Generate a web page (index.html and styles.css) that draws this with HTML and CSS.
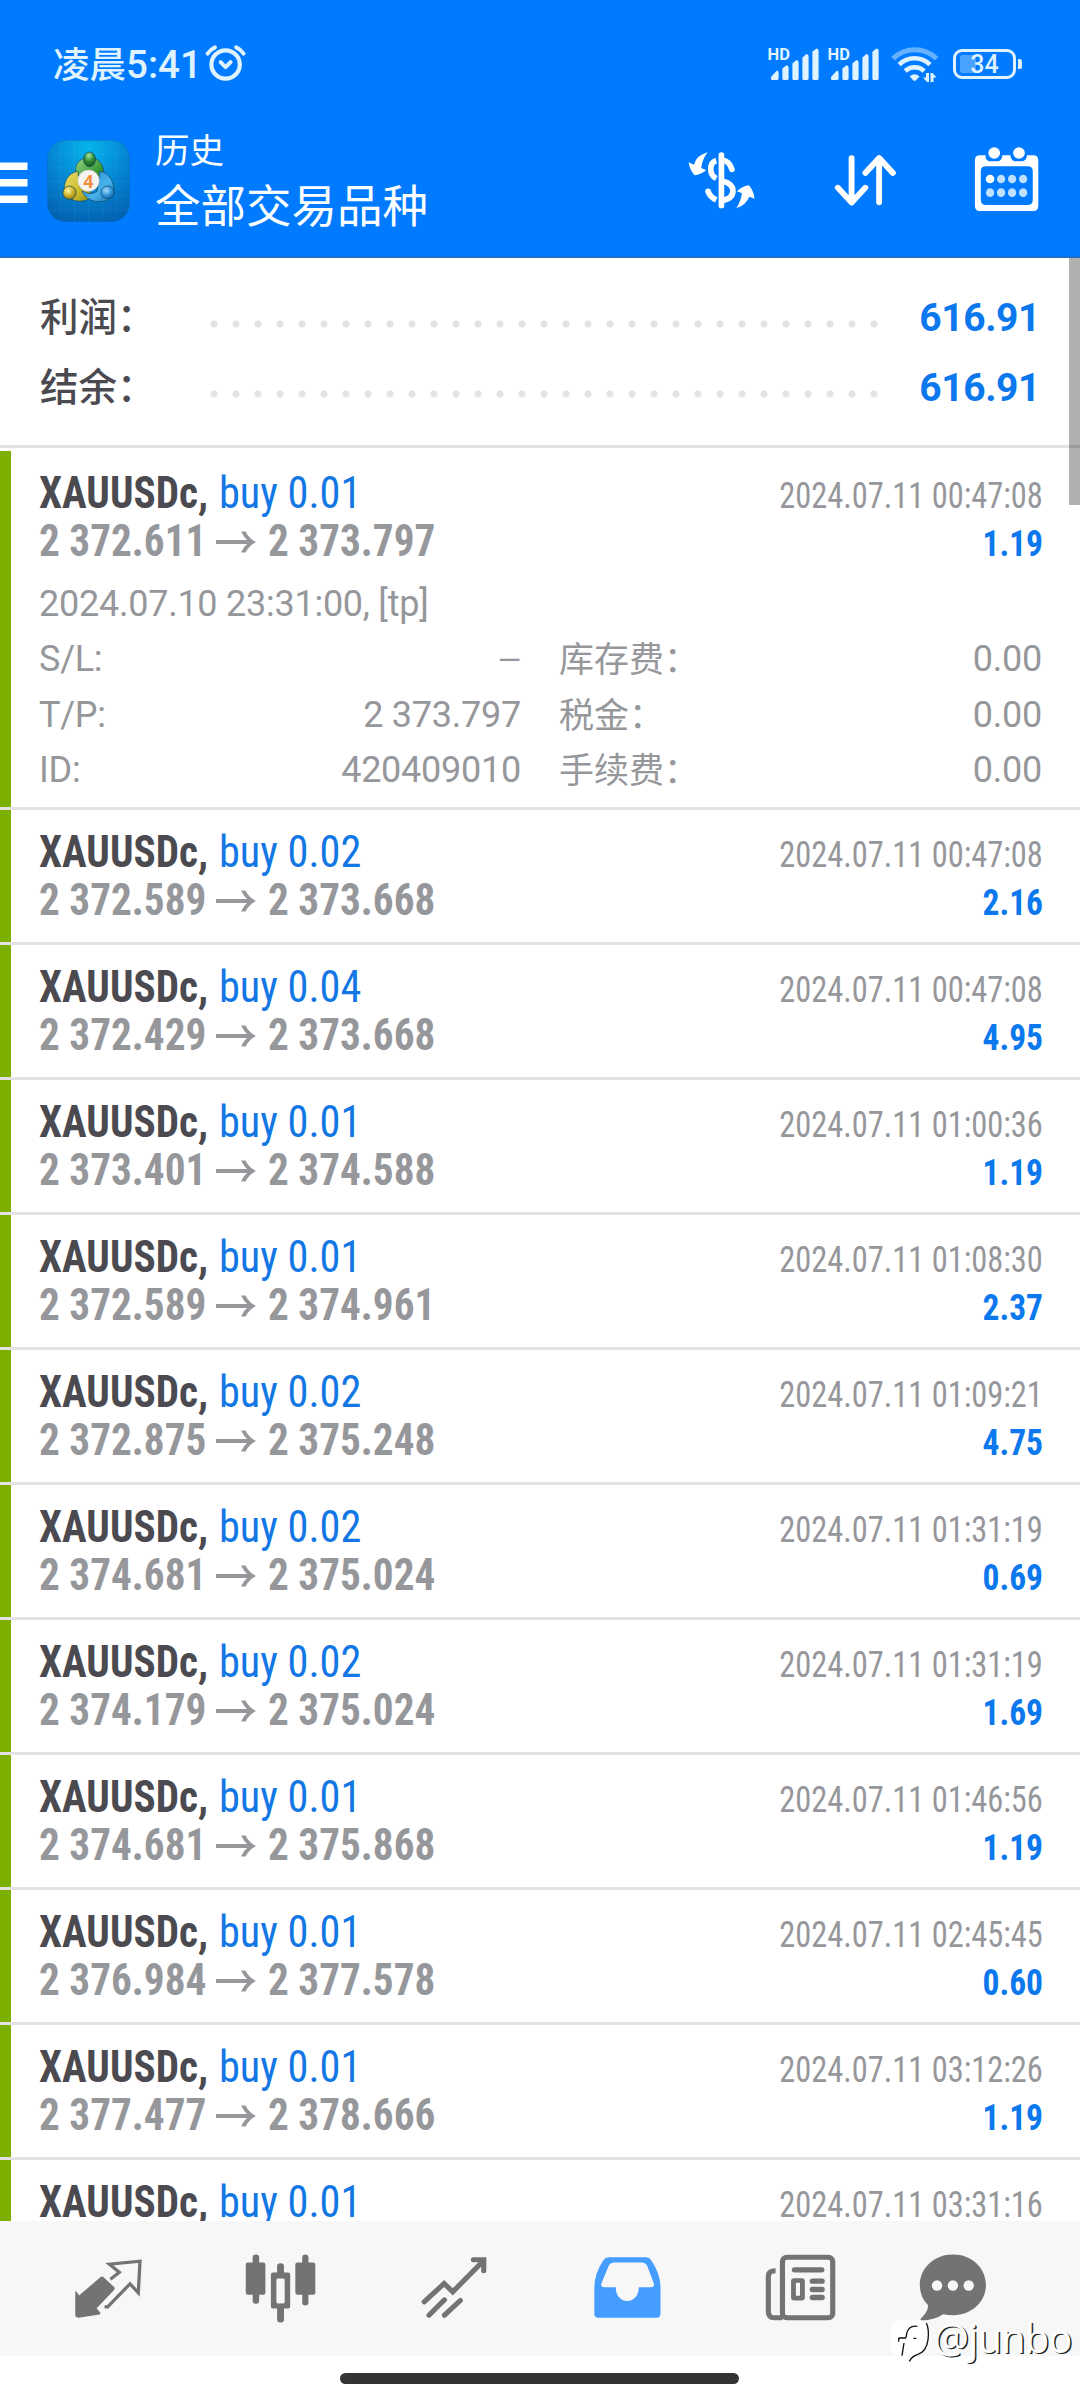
FILE: index.html
```
<!DOCTYPE html>
<html lang="zh-CN">
<head>
<meta charset="utf-8">
<title>历史</title>
<link rel="stylesheet" href="styles.css">
</head>
<body>
<div class="screen">
  <header class="header">
    <div class="status">
      <span class="clock"><span class="clock-period">凌晨</span>5:41</span>
      <svg class="alarm" width="44" height="44" viewBox="0 0 44 44" fill="none" stroke="#dff3ff" stroke-linecap="round">
        <circle cx="22.6" cy="23.5" r="14.2" stroke-width="4.2"/>
        <path d="M17.6 21.2 L22.6 26.2 L27.6 21.2" stroke-width="4" stroke-linejoin="round"/>
        <path d="M4.6 12.6 Q7.5 8.5 12 6.4 M33.2 6.4 Q37.7 8.5 40.6 12.6" stroke-width="4"/>
      </svg>
      <svg class="indicators" width="260" height="44" viewBox="0 0 260 44" fill="#dff3ff">
        <g id="signal">
          <text class="hd" x="6.5" y="18">HD</text>
          <path d="M10 38 V35 L16 28.6 Q17.6 29 17.6 31 V36.5 Q17.6 38 16 38 H11 Q10 38 10 37Z"/>
          <path d="M21.4 36.8 V26.5 L25.5 23.2 Q27.6 23.4 27.6 25.5 V36.5 Q27.6 38 26 38 H22.8 Q21.4 38 21.4 36.8Z"/>
          <path d="M31.4 36.8 V21.5 L35.5 18 Q37.6 18.2 37.6 20.5 V36.5 Q37.6 38 36 38 H32.8 Q31.4 38 31.4 36.8Z"/>
          <path d="M41.4 36.8 V15.5 L45.5 12 Q47.6 12.2 47.6 14.5 V36.5 Q47.6 38 46 38 H42.8 Q41.4 38 41.4 36.8Z"/>
          <path d="M51.4 36.8 V9.8 L55.5 6.6 Q57.6 6.8 57.6 9 V36.5 Q57.6 38 56 38 H52.8 Q51.4 38 51.4 36.8Z"/>
        </g>
        <use href="#signal" x="60"/>
        <g fill="none" stroke="#dff3ff">
          <path d="M132 16.8 A31 31 0 0 1 175.6 16.8" stroke="#66b1ff" stroke-width="5"/>
          <path d="M138.2 22.6 A22 22 0 0 1 169 22.6" stroke-width="4.6"/>
          <path d="M144.2 29 A14 14 0 0 1 163.2 29" stroke-width="4.6"/>
        </g>
        <path d="M148.7 34.5 Q153.6 30 158.5 34.5 L154.8 38.4 Q153.6 39.3 152.4 38.4Z"/>
        <path d="M165 31 H168 V40 H166 L162 35.6 H165Z M169.5 31 H171.5 L175.6 35.6 H172.5 V40 H169.5Z"/>
        <rect x="193.5" y="8.5" width="60" height="27" rx="7.5" fill="none" stroke="#dff3ff" stroke-width="3"/>
        <path d="M202 13 H215 V31 H202 Q199 31 199 28 V16 Q199 13 202 13Z" fill="#4aa2ff"/>
        <path d="M257 17 h1.5 q2.500 0 2.500 2.500 v5 q0 2.500 -2.500 2.500 h-1.500z"/>
        <text class="battery-text" x="223.500" y="30.800" text-anchor="middle">34</text>
      </svg>
    </div>
    <div class="toolbar">
      <svg class="menu" width="28" height="42" viewBox="0 0 28 42" fill="#fff">
        <path d="M0 0.5h27.500v7.500h-27.500z M0 17h27.500v7.500h-27.500z M0 33.500h27.500v7.500h-27.500z"/>
      </svg>
      <svg class="logo" width="83" height="82" viewBox="20 30 248 246">
        <defs>
          <radialGradient id="bg" cx=".5" cy=".1" r=".95"><stop offset="0" stop-color="#06b4ec"/><stop offset=".5" stop-color="#0586d3"/><stop offset="1" stop-color="#0260b0"/></radialGradient>
          <linearGradient id="gr" x1="0" y1="0" x2="1" y2="1"><stop offset="0" stop-color="#9bd488"/><stop offset=".6" stop-color="#3f9e3a"/><stop offset="1" stop-color="#1f7426"/></linearGradient>
          <linearGradient id="ye" x1="0" y1="0" x2="1" y2="1"><stop offset="0" stop-color="#e9dd6c"/><stop offset=".6" stop-color="#cdbd2c"/><stop offset="1" stop-color="#8f8714"/></linearGradient>
          <linearGradient id="bl" x1="0" y1="0" x2="1" y2="1"><stop offset="0" stop-color="#2687cc"/><stop offset=".6" stop-color="#4ab2ea"/><stop offset="1" stop-color="#136fae"/></linearGradient>
          <radialGradient id="hg" cx=".45" cy=".25" r=".8"><stop offset="0" stop-color="#a8e59a"/><stop offset=".5" stop-color="#318d36"/><stop offset="1" stop-color="#0e4f1a"/></radialGradient>
          <radialGradient id="hy" cx=".4" cy=".35" r=".8"><stop offset="0" stop-color="#fff8a8"/><stop offset=".5" stop-color="#c8ae24"/><stop offset="1" stop-color="#716710"/></radialGradient>
          <radialGradient id="hb" cx=".4" cy=".35" r=".8"><stop offset="0" stop-color="#a6dcfa"/><stop offset=".5" stop-color="#2f94d8"/><stop offset="1" stop-color="#0b548f"/></radialGradient>
        </defs>
        <rect x="21" y="31" width="246" height="244" rx="54" fill="url(#bg)" stroke="#0a66b4" stroke-opacity=".6" stroke-width="2"/>
        <path d="M60 33V273 M102 31V275 M144 31V275 M187 31V275 M229 33V273 M22 70H266 M21 112H267 M21 155H267 M21 198H267 M22 240H266" stroke="#5cc8f4" stroke-opacity=".16" stroke-width="2"/>
        <g stroke="#0c4a66" stroke-opacity=".65" stroke-width="3">
          <path d="M144 82 C174 80 194 108 189 138 C186 152 178 160 168 162 L160 150 H120 L112 132 C97 122 108 84 144 82Z" fill="url(#gr)"/>
          <path d="M112 124 C82 128 68 158 72 184 C78 208 112 220 138 210 C148 206 152 196 150 186 L118 172Z" fill="url(#ye)"/>
          <path d="M178 124 C206 126 222 158 220 188 C214 216 172 220 152 210 C138 204 128 194 124 182 C140 192 156 194 170 184Z" fill="url(#bl)"/>
          <ellipse cx="147" cy="88" rx="18" ry="22" fill="url(#hg)"/>
          <ellipse cx="87" cy="188" rx="20" ry="20" fill="url(#hy)"/>
          <ellipse cx="201" cy="187" rx="20" ry="19" fill="url(#hb)"/>
        </g>
        <circle cx="144" cy="152" r="32" fill="#f6f4f0" stroke="#c9c9c4" stroke-width="2"/>
        <text class="logo-digit" x="144" y="173" text-anchor="middle">4</text>
      </svg>
      <div class="titles">
        <div class="title-small">历史</div>
        <div class="title-main">全部交易品种</div>
      </div>
      <div class="actions">
        <svg width="80" height="80" viewBox="7.2 2 240 240" fill="#fff">
          <rect x="117" y="39" width="17" height="168" rx="8"/>
          <g fill="none" stroke="#fff" stroke-width="17">
            <path d="M110 63.500 Q93.500 69 93.500 89 Q93.500 109 110 117.500"/>
            <path d="M130 126 Q160 133 160 155 Q160 177 130 183"/>
            <path d="M130 62.500 Q150 66 157 90" stroke-linecap="round"/>
            <path d="M110 181.500 Q91 173 86 157"/>
          </g>
          <circle cx="85.500" cy="156" r="8.500"/>
          <path d="M84 39 Q50 48 43 76 L27 69 Q30 92 45 108 Q62 107 80 93 L65 86 Q68 60 84 39Z"/>
          <path d="M170 207 Q200 196 209 172 L225 178 Q222 154 208 138 Q190 139 172 156 L187 162 Q184 186 170 207Z"/>
        </svg>
        <svg width="80" height="80" viewBox="826.8 362 232.3 240" preserveAspectRatio="none" fill="none" stroke="#fff" stroke-width="17" stroke-linecap="round" stroke-linejoin="round">
          <path d="M904 416 V548 M864 505 L904 550 L944 505 M984 549 V417 M944 461 L984 416 L1024 461"/>
        </svg>
        <svg width="80" height="80" viewBox="1240 362 232.3 240" preserveAspectRatio="none" fill="#fff">
          <path fill-rule="evenodd" d="M1277 408 H1294 V415 Q1297 426 1310 426 H1330 Q1341 425 1343 408 H1366 Q1368 425 1379 426 H1400 Q1413 425 1414 408 H1432 Q1447 408 1447 422 V560 Q1447 575 1432 575 H1277 Q1263 575 1263 560 V422 Q1263 408 1277 408Z M1295 441 Q1280 441 1280 456 V541 Q1280 557 1295 557 H1416 Q1431 557 1431 541 V456 Q1431 441 1416 441Z"/>
          <ellipse cx="1319" cy="401" rx="17" ry="17"/><ellipse cx="1391" cy="401" rx="17" ry="17"/>
          <ellipse cx="1307" cy="479" rx="12.500" ry="13"/>
          <g fill="#bfe0ff"><ellipse cx="1339" cy="479" rx="12" ry="13"/><ellipse cx="1371" cy="479" rx="12" ry="13"/><ellipse cx="1403" cy="479" rx="12" ry="13"/><ellipse cx="1307" cy="520" rx="12" ry="13"/><ellipse cx="1339" cy="520" rx="12" ry="13"/><ellipse cx="1371" cy="520" rx="12" ry="13"/><ellipse cx="1403" cy="520" rx="12" ry="13"/></g>
        </svg>
      </div>
    </div>
  </header>

  <main class="content">
    <div class="scrollbar"></div>
    <section class="summary">
      <div class="sum-row"><span class="sum-label">利润：</span><span class="dots"></span><span class="sum-value">616.91</span></div>
      <div class="sum-row"><span class="sum-label">结余：</span><span class="dots"></span><span class="sum-value">616.91</span></div>
    </section>
    <article class="deal deal-open">
      <div class="line"><span class="symbol">XAUUSDc,</span><span class="side">buy 0.01</span><span class="date">2024.07.11 00:47:08</span></div>
      <div class="line"><span class="price">2 372.611</span><svg class="arrow" width="40" height="22" viewBox="0 0 40 22"><path class="arrow-shaft" d="M0 11H37"/><path class="arrow-head" d="M25 0.500H29.500Q33 7.500 40 11Q33 14.500 29.500 21.500H25Q28 15 33 11Q28 7 25 0.500Z"/></svg><span class="price">2 373.797</span><span class="profit">1.19</span></div>
      <div class="details">
        <div class="wide">2024.07.10 23:31:00, [tp]</div>
        <div class="pair"><span>S/L:</span><span class="none">—</span></div><div class="pair"><span class="cjk">库存费：</span><span>0.00</span></div>
        <div class="pair"><span>T/P:</span><span>2 373.797</span></div><div class="pair"><span class="cjk">税金：</span><span>0.00</span></div>
        <div class="pair"><span>ID:</span><span>420409010</span></div><div class="pair"><span class="cjk">手续费：</span><span>0.00</span></div>
      </div>
    </article>
    <div id="deals"></div>
  </main>

  <nav class="tabs">
    <svg width="80" height="80" viewBox="197.9 325.5 232.3 240" preserveAspectRatio="none" fill="#737373">
      <path d="M219 452 Q223 452 230 465 L291 411 Q297 405 302 411 L331 439 Q336 444 331 449 L281 503 L292 517 Q293 520 289 522 L229 532 Q219 532 219 523Z"/>
      <path fill="none" stroke="#737373" stroke-width="9.5" d="M321 416 L347 395 L318 371 L407 362 L402 457 L378 430 L313 499 H304"/>
    </svg>
    <svg width="80" height="80" viewBox="701.2 325.5 232.3 240" preserveAspectRatio="none" fill="#737373">
      <rect x="715" y="366" width="57" height="97" rx="6"/><rect x="735" y="342" width="19" height="148" rx="9"/>
      <rect x="859" y="366" width="58" height="97" rx="6"/><rect x="879" y="342" width="18" height="153" rx="9"/>
      <rect x="806" y="368" width="20" height="40" rx="9"/><rect x="806" y="490" width="20" height="56" rx="9"/>
      <path fill-rule="evenodd" d="M794 396 H838 Q844 396 844 402 V498 Q844 504 838 504 H794 Q788 504 788 498 V402 Q788 396 794 396Z M808 414 Q804 414 804 420 V484 Q804 489 808 489 H824 Q828 489 828 484 V420 Q828 414 824 414Z"/>
    </svg>
    <svg width="80" height="80" viewBox="1204.4 325.5 232.3 240" preserveAspectRatio="none" fill="none" stroke="#737373" stroke-width="15" stroke-linecap="round">
      <path d="M1231 484 L1289 429 L1314 454 L1404 360 M1374 358 H1404 V391 M1245 524 L1290 478 M1290 524 L1336 480"/>
    </svg>
    <svg width="80" height="80" viewBox="139.5 325.5 232.3 240" preserveAspectRatio="none" fill="#459dff">
      <path fill-rule="evenodd" d="M200 350 H309 Q318 350 323 359 Q350 400 350 440 V520 Q350 532 338 532 H170 Q158 532 158 520 V440 Q158 400 184 359 Q190 350 200 350Z M213 366 Q204 367 200 375 L178 430 Q176 440 187 440 H220 C220 495 287 495 287 440 H322 Q333 440 331 430 L312 378 Q308 367 296 366Z"/>
    </svg>
    <svg width="80" height="80" viewBox="642.7 325.5 232.3 240" preserveAspectRatio="none" fill="none" stroke="#737373">
      <rect x="705" y="350" width="146" height="182" rx="13" stroke-width="15"/>
      <path d="M685 391 Q664 391 664 408 V512 Q664 532 682 532 H705" stroke-width="15"/>
      <path d="M740 388 H819 M792 422 H820 M792 447 H820 M792 471 H820" stroke-width="16" stroke-linecap="round"/>
      <rect x="737" y="420" width="26" height="53" rx="2" stroke-width="14"/>
    </svg>
    <svg width="80" height="80" viewBox="1083.2 325.5 232.3 240" preserveAspectRatio="none" fill="#737373">
      <path d="M1199 342 C1255 342 1295 383 1295 434 C1295 485 1252 524 1200 524 Q1185 524 1171 521 Q1145 539 1108 540 Q1103 538 1106 534 Q1127 514 1127 494 Q1103 470 1103 434 C1103 383 1144 342 1199 342Z"/>
      <g fill="#f7f7f7"><ellipse cx="1153" cy="435" rx="15" ry="16"/><ellipse cx="1199" cy="435" rx="15" ry="16"/><ellipse cx="1245" cy="435" rx="15" ry="16"/></g>
    </svg>
  </nav>
  <div class="home-area"><div class="home-bar"></div></div>

  <div class="watermark">
    <svg width="42" height="46" viewBox="25 0 126 138">
      <path d="M60 2 H115 Q146 4 146 55 Q144 98 112 108 Q98 112 88 128 Q84 118 80 110 H60 Q30 108 30 80 V32 Q32 4 60 2Z" fill="#fff"/>
      <path d="M137 12 Q146 30 142 62 Q138 98 110 107 Q94 112 86 127" fill="none" stroke="#111" stroke-width="4"/>
      <path d="M110 22 Q84 18 78 44 L76 56 M54 57 H76 M54 57 V68 M70 72 L64 110 M98 58 H107" fill="none" stroke="#111" stroke-width="4"/>
    </svg>
    <span class="watermark-text">@junbo</span>
  </div>
</div>
<script src="deals.js"></script>
</body>
</html>
```
FILE: deals.js
```
const deals = [
  ["0.02", "2 372.589", "2 373.668", "00:47:08", "2.16"],
  ["0.04", "2 372.429", "2 373.668", "00:47:08", "4.95"],
  ["0.01", "2 373.401", "2 374.588", "01:00:36", "1.19"],
  ["0.01", "2 372.589", "2 374.961", "01:08:30", "2.37"],
  ["0.02", "2 372.875", "2 375.248", "01:09:21", "4.75"],
  ["0.02", "2 374.681", "2 375.024", "01:31:19", "0.69"],
  ["0.02", "2 374.179", "2 375.024", "01:31:19", "1.69"],
  ["0.01", "2 374.681", "2 375.868", "01:46:56", "1.19"],
  ["0.01", "2 376.984", "2 377.578", "02:45:45", "0.60"],
  ["0.01", "2 377.477", "2 378.666", "03:12:26", "1.19"],
  ["0.01", "", "", "03:31:16", ""]
];
const arrow = document.querySelector(".arrow").outerHTML;
document.getElementById("deals").innerHTML = deals.map(([lots, open, close, time, profit]) => `
  <article class="deal">
    <div class="line"><span class="symbol">XAUUSDc,</span><span class="side">buy ${lots}</span><span class="date">2024.07.11 ${time}</span></div>
    ${open ? `<div class="line"><span class="price">${open}</span>${arrow}<span class="price">${close}</span><span class="profit">${profit}</span></div>` : ""}
  </article>`).join("");
```
FILE: styles.css
```
* { box-sizing: border-box; }
body { margin: 0; background: #fff; font-family: Roboto, "Noto Sans CJK SC", sans-serif; }
.screen { position: relative; display: flex; flex-direction: column; width: 1080px; height: 2400px; overflow: hidden; }

.header { flex: none; height: 258px; background: #007aff; border-bottom: 2px solid #1a6fcd; color: #fafeff; }
.status { display: flex; height: 104px; padding: 26px 0 0 53px; color: #dff3ff; }
.clock { display: flex; width: 150px; height: 78px; font-size: 38.500px; font-weight: 500; line-height: 78px; white-space: nowrap; }
.clock-period { font: 500 36.500px/74px "Noto Sans CJK SC", sans-serif; }
.alarm { margin-top: 15px; }
.indicators { margin: 16px 0 0 513.500px; overflow: visible; }
.hd { font: 700 16.500px Roboto, sans-serif; letter-spacing: .2px; }
.battery-text { font: 500 25px Roboto, sans-serif; }

.toolbar { display: flex; align-items: center; height: 152px; padding-right: 33px; }
.menu { margin-top: 6px; }
.logo { margin: 2px 0 0 18.500px; }
.logo-digit { font: 700 54px "Open Sans", sans-serif; fill: #ef8f3c; }
.titles { margin-left: 25.500px; font-family: "Noto Sans CJK SC", sans-serif; white-space: nowrap; }
.title-small { font-size: 34.500px; line-height: 44px; padding-bottom: 3px; }
.title-main { font-size: 45.500px; line-height: 60px; padding-bottom: 2px; }
.actions { display: flex; gap: 62.300px; margin-left: auto; }

.content { position: relative; flex: 1; min-height: 0; overflow: hidden; }
.scrollbar { position: absolute; z-index: 2; top: 0; right: 0; width: 11px; height: 247px; background: rgba(0, 0, 0, .31); }

.summary { height: 190px; padding: 23px 44px 0 40px; border-bottom: 3px solid #e3e3e3; }
.sum-row { display: flex; height: 70px; }
.sum-label { width: 162.500px; font: 500 38.500px/66px "Noto Sans CJK SC", sans-serif; color: #4b4a50; white-space: nowrap; }
.dots { width: 682px; height: 8px; margin-top: 39.300px; background: radial-gradient(circle, #e3e3e3 3.200px, transparent 3.900px) 0 0 / 22px 8px repeat-x; }
.sum-value { margin: 0 -4px 0 auto; font-size: 39px; font-weight: 700; line-height: 74px; letter-spacing: -.4px; color: #0b78ee; }

.deal { height: 135px; padding: 18px 38px 0 39px; border-bottom: 3px solid #e3e3e3; background: linear-gradient(#7daf00, #7daf00) 0 0 / 11px 100% no-repeat padding-box; }
.deal-open { height: 359px; margin-top: 3px; }
.line { display: flex; align-items: baseline; height: 48px; line-height: 48px; font-family: "Roboto Condensed", Roboto, sans-serif; font-size: 44px; white-space: nowrap; color: #96979b; }
.symbol, .side, .price { transform-origin: 0 50%; }
.symbol { width: 180px; font-weight: 700; color: #4b4a50; transform: scaleX(.937); }
.side { color: #1277e4; transform: scaleX(.96); }
.price { width: 177px; font-weight: 700; transform: scaleX(.937); }
.arrow { align-self: center; width: 40px; margin: 1px 11.500px 0 0; }
.arrow-shaft { stroke: #96979b; stroke-width: 4; }
.arrow-head { fill: #96979b; }
.date, .profit { margin: 0 -1px 0 auto; font-size: 36px; transform-origin: 100% 50%; }
.date { transform: scaleX(.9); }
.profit { font-weight: 700; color: #0b78ee; transform: scaleX(.93); }

.details { display: grid; grid-template-columns: 482px 482px; column-gap: 39px; grid-auto-rows: 55.500px; margin-top: 11.500px; font-size: 36px; line-height: 55.500px; letter-spacing: -.25px; color: #96979b; white-space: nowrap; }
.wide { grid-column: 1 / -1; }
.pair { display: flex; justify-content: space-between; }
.none { font-size: 30px; }
.cjk { font: 400 35px/50px "Noto Sans CJK SC", sans-serif; letter-spacing: 0; margin-left: -1px; }

.tabs { flex: none; display: grid; grid-template-columns: repeat(5, 173.300px) 130px; place-items: center; height: 135px; padding-left: 21.500px; background: #f7f7f7; }
.home-area { flex: none; height: 44px; padding-top: 17px; }
.home-bar { width: 399px; height: 11px; margin-left: 340px; border-radius: 6px; background: #333; }

.watermark { position: absolute; left: 889px; top: 2319px; display: flex; }
.watermark-text { margin: -4px 0 0 2.500px; font: 400 39.500px/46px "Open Sans", sans-serif; letter-spacing: -.6px; color: #fff; text-shadow: 1.500px 1px .5px #222; }
```
